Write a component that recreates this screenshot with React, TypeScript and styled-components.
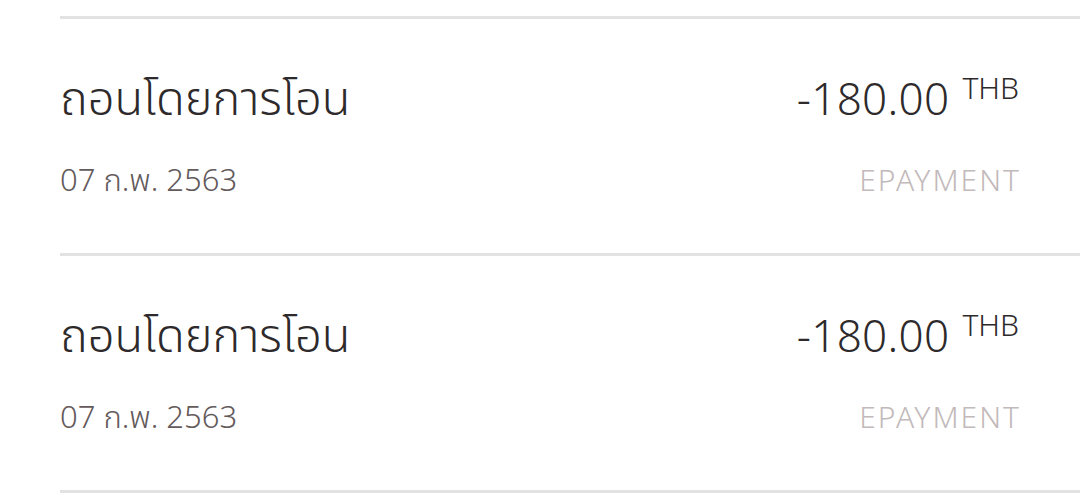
import React from "react";
import styled, { createGlobalStyle } from "styled-components";

const Global = createGlobalStyle`
  html, body { margin: 0; padding: 0; background: #ffffff; overflow: hidden; }
  body { font-family: "Noto Sans", "Noto Sans Thai", sans-serif; }
`;

const List = styled.div`
  padding: 16px 0 0 60px;
  display: flex;
  flex-direction: column;
`;

const Row = styled.div`
  border-top: 3px solid #e2e2e2;
  height: 237px;
  padding-right: 61px;
  display: flex;
  flex-direction: column;
  box-sizing: border-box;
`;

const Divider = styled.div`
  border-top: 3px solid #e2e2e2;
`;

const Line = styled.div<{ $top: number; $h: number }>`
  display: flex;
  justify-content: space-between;
  align-items: baseline;
  margin-top: ${(p) => p.$top}px;
  height: ${(p) => p.$h}px;
`;

const Title = styled.span`
  font-size: 47px;
  font-weight: 300;
  color: #2e2a2b;
  line-height: 1;
`;

const Amount = styled.span`
  font-size: 44px;
  font-weight: 300;
  color: #2e2a2b;
  line-height: 1;
  letter-spacing: 0.3px;
`;

const Currency = styled.sup`
  font-size: 30px;
  margin-left: 13px;
  vertical-align: 16px;
  line-height: 0;
  letter-spacing: 0;
`;

const DateText = styled.span`
  font-size: 31px;
  font-weight: 300;
  color: #635a5b;
  line-height: 1;
`;

const Channel = styled.span`
  font-size: 30px;
  font-weight: 300;
  color: #c2b9ba;
  line-height: 1;
  letter-spacing: 2px;
  margin-right: -2px;
`;

const items = [
  { title: "ถอนโดยการโอน", amount: "-180.00", date: "07 ก.พ. 2563", channel: "EPAYMENT" },
  { title: "ถอนโดยการโอน", amount: "-180.00", date: "07 ก.พ. 2563", channel: "EPAYMENT" },
];

export default function App() {
  return (
    <>
      <Global />
      <List>
        {items.map((it, i) => (
          <Row key={i}>
            <Line $top={55} $h={60}>
              <Title>{it.title}</Title>
              <Amount>
                {it.amount}
                <Currency>THB</Currency>
              </Amount>
            </Line>
            <Line $top={30} $h={40}>
              <DateText>{it.date}</DateText>
              <Channel>{it.channel}</Channel>
            </Line>
          </Row>
        ))}
        <Divider />
      </List>
    </>
  );
}
